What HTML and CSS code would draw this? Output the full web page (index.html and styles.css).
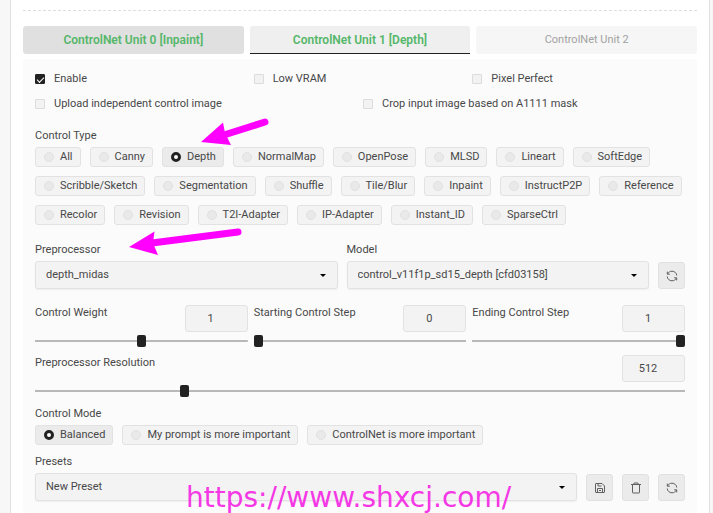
FILE: index.html
```html
<!DOCTYPE html>
<html lang="en">
<head>
<meta charset="utf-8">
<title>ControlNet</title>
<link rel="stylesheet" href="styles.css">
</head>
<body>
<svg class="sprite" aria-hidden="true">
  <symbol id="refresh" viewBox="0 0 12 12"><path d="M1.3 4.2V1.6M1.3 4.2H3.8M1.5 4C2.4 2.2 4.1 1.2 6 1.2c2.6 0 4.5 1.8 4.8 4.3M10.7 7.8v2.6M10.7 7.8H8.2M10.5 8C9.6 9.8 7.9 10.8 6 10.8 3.4 10.8 1.5 9 1.2 6.5"/></symbol>
  <symbol id="save" viewBox="0 0 12 12"><path d="M2 1.500h6L10.500 4v6q0 .5-.5.500H2q-.5 0-.5-.5V2q0-.5.500-.5zM3.500 10.500v-4h5v4M4 1.500v2.500h3.500M5 8.500h2"/></symbol>
  <symbol id="trash" viewBox="0 0 12 12"><path d="M1 2.500h10M4 2.500v-1.500h4v1.500M2.500 2.500v8q0 .5.500.5h6q.5 0 .5-.5v-8"/></symbol>
</svg>
<main class="frame">
  <hr class="divider">
  <div class="tabs" role="tablist">
    <button class="tab tab-hover" role="tab">ControlNet Unit 0 [Inpaint]</button>
    <button class="tab tab-active" role="tab" aria-selected="true">ControlNet Unit 1 [Depth]</button>
    <button class="tab" role="tab">ControlNet Unit 2</button>
  </div>
  <section class="panel">
    <div class="checks thirds">
      <label class="check"><input type="checkbox" checked>Enable</label>
      <label class="check"><input type="checkbox">Low VRAM</label>
      <label class="check"><input type="checkbox">Pixel Perfect</label>
    </div>
    <div class="checks halves">
      <label class="check"><input type="checkbox">Upload independent control image</label>
      <label class="check"><input type="checkbox">Crop input image based on A1111 mask</label>
    </div>

    <fieldset class="group types">
      <legend class="caption">Control Type</legend>
      <div class="pills">
        <label class="pill"><input type="radio" name="type">All</label>
        <label class="pill"><input type="radio" name="type">Canny</label>
        <label class="pill"><input type="radio" name="type" checked>Depth</label>
        <label class="pill"><input type="radio" name="type">NormalMap</label>
        <label class="pill"><input type="radio" name="type">OpenPose</label>
        <label class="pill"><input type="radio" name="type">MLSD</label>
        <label class="pill"><input type="radio" name="type">Lineart</label>
        <label class="pill"><input type="radio" name="type">SoftEdge</label>
        <label class="pill"><input type="radio" name="type">Scribble/Sketch</label>
        <label class="pill"><input type="radio" name="type">Segmentation</label>
        <label class="pill"><input type="radio" name="type">Shuffle</label>
        <label class="pill"><input type="radio" name="type">Tile/Blur</label>
        <label class="pill"><input type="radio" name="type">Inpaint</label>
        <label class="pill"><input type="radio" name="type">InstructP2P</label>
        <label class="pill"><input type="radio" name="type">Reference</label>
        <label class="pill"><input type="radio" name="type">Recolor</label>
        <label class="pill"><input type="radio" name="type">Revision</label>
        <label class="pill"><input type="radio" name="type">T2I-Adapter</label>
        <label class="pill"><input type="radio" name="type">IP-Adapter</label>
        <label class="pill"><input type="radio" name="type">Instant_ID</label>
        <label class="pill"><input type="radio" name="type">SparseCtrl</label>
      </div>
    </fieldset>

    <div class="row models">
      <div class="field">
        <label class="caption" for="pre">Preprocessor</label>
        <div class="select"><select id="pre"><option>depth_midas</option></select></div>
      </div>
      <div class="field">
        <label class="caption" for="model">Model</label>
        <div class="select"><select id="model"><option>control_v11f1p_sd15_depth [cfd03158]</option></select></div>
      </div>
      <button class="tool" aria-label="Refresh models"><svg><use href="#refresh"/></svg></button>
    </div>

    <div class="thirds">
      <div class="slider">
        <div class="slider-head"><label for="weight">Control Weight</label><input class="number" type="text" value="1" aria-label="Control Weight value"></div>
        <input id="weight" type="range" min="0" max="2" step="0.05" value="1">
      </div>
      <div class="slider">
        <div class="slider-head"><label for="start">Starting Control Step</label><input class="number" type="text" value="0" aria-label="Starting Control Step value"></div>
        <input id="start" type="range" min="0" max="1" step="0.01" value="0">
      </div>
      <div class="slider">
        <div class="slider-head"><label for="end">Ending Control Step</label><input class="number" type="text" value="1" aria-label="Ending Control Step value"></div>
        <input id="end" type="range" min="0" max="1" step="0.01" value="1">
      </div>
    </div>
    <div class="slider resolution">
      <div class="slider-head"><label for="res">Preprocessor Resolution</label><input class="number" type="text" value="512" aria-label="Preprocessor Resolution value"></div>
      <input id="res" type="range" min="64" max="2048" step="8" value="512">
    </div>

    <fieldset class="group">
      <legend class="caption">Control Mode</legend>
      <div class="pills">
        <label class="pill"><input type="radio" name="mode" checked>Balanced</label>
        <label class="pill"><input type="radio" name="mode">My prompt is more important</label>
        <label class="pill"><input type="radio" name="mode">ControlNet is more important</label>
      </div>
    </fieldset>

    <div class="row presets">
      <div class="field">
        <label class="caption" for="preset">Presets</label>
        <div class="select"><select id="preset"><option>New Preset</option></select></div>
      </div>
      <button class="tool" aria-label="Save preset"><svg><use href="#save"/></svg></button>
      <button class="tool" aria-label="Delete preset"><svg><use href="#trash"/></svg></button>
      <button class="tool" aria-label="Refresh presets"><svg><use href="#refresh"/></svg></button>
    </div>
  </section>
</main>
<svg class="arrows" width="300" height="260" aria-hidden="true">
  <path class="shaft" d="M265 122L224 135M238 232L152 243"/>
  <path d="M201 142L223 122.500L225 133L231 145ZM129 247L154.500 231.500L153 243L158 255Z"/>
</svg>
<div class="watermark">https://www.shxcj.com/</div>
</body>
</html>
```
FILE: styles.css
```css
* { box-sizing: border-box; }
body {
  margin: 0;
  position: relative;
  background: #f7f7f7;
  color: #484848;
  font: 11px/16px Roboto, "Liberation Sans", sans-serif;
}
button, input, select { font: inherit; color: inherit; margin: 0; }
.sprite { position: absolute; width: 0; height: 0; }
.frame {
  min-height: 100vh;
  margin: 0 3px 0 10px;
  padding: 10px 12px 0;
  background: #fff;
  border: solid #e0e0e0;
  border-width: 0 1px;
}
.divider { margin: 0 0 15px; border: 0; border-top: 1px dashed #dedede; }
.tabs { display: grid; grid-template-columns: repeat(3, 1fr); gap: 6px; margin-bottom: 5px; }
.tab {
  height: 28px;
  padding: 0;
  border: 0;
  border-radius: 3px;
  background: #f6f6f6;
  color: #a2a2a2;
}
.tab-hover, .tab-active { color: #55b76a; font-size: 12px; font-weight: 600; }
.tab-hover { background: #e0e0e0; }
.tab-active { background: #efefef; border-bottom: 1px solid #222; border-radius: 3px 3px 0 0; }
.panel { padding: 12px; background: #fbfbfb; border-radius: 4px; }
.thirds { display: grid; grid-template-columns: repeat(3, 1fr); gap: 6px; }
.halves { display: grid; grid-template-columns: repeat(2, 1fr); gap: 6px; }
.checks { margin-bottom: 9px; }
.check { display: flex; align-items: center; gap: 9px; }
.check input {
  appearance: none;
  width: 10px;
  height: 10px;
  border: 1px solid #dcdcdc;
  border-radius: 1px;
  background: #f2f2f2;
  display: grid;
  place-items: center;
}
.check input:checked { background: #222; border-color: #222; }
.check input:checked::after {
  content: "";
  width: 6px;
  height: 3px;
  border: solid #fff;
  border-width: 0 0 1px 1px;
  transform: rotate(-45deg);
}
.group { margin: 0; padding: 0; border: 0; min-width: 0; }
.types { margin-top: 16px; }
.caption { display: block; padding: 0; margin-bottom: 3px; }
.pills { display: flex; flex-wrap: wrap; gap: 9px; }
.pill {
  display: flex;
  align-items: center;
  gap: 6px;
  height: 20px;
  padding: 0 7px 0 8px;
  border: 1px solid #e2e2e2;
  border-radius: 3px;
  background: #f3f3f3;
}
.pill:has(:checked) { background: #ebebeb; }
.pill input {
  appearance: none;
  width: 10px;
  height: 10px;
  border: 1px solid #e1e1e1;
  border-radius: 50%;
  background: #e9e9e9;
}
.pill input:checked { border: 3px solid #222; background: #fff; }
.row { display: flex; align-items: flex-end; gap: 9px; }
.models { margin: 17px 0 16px; }
.field { flex: 1; min-width: 0; }
.select { position: relative; }
.select::after {
  content: "";
  position: absolute;
  right: 12px;
  top: 13px;
  border: 3px solid transparent;
  border-top-color: #000;
  border-bottom: 0;
}
select {
  appearance: none;
  display: block;
  width: 100%;
  height: 28px;
  padding: 0 24px 0 10px;
  border: 1px solid #e2e2e2;
  border-radius: 3px;
  background: #f3f3f3;
  box-shadow: 0 1px 2px #0000000d;
}
.tool {
  display: grid;
  place-items: center;
  width: 27px;
  height: 27px;
  padding: 0;
  border: 1px solid #e1e1e1;
  border-radius: 3px;
  background: #ebebeb;
}
.tool svg { width: 12px; height: 12px; fill: none; stroke: #606060; }
.slider-head { display: flex; justify-content: space-between; }
.number {
  width: 63px;
  height: 27px;
  padding: 0 11px 0 0;
  border: 1px solid #e2e2e2;
  border-radius: 3px;
  background: #f3f3f3;
  text-align: center;
}
input[type="range"] {
  appearance: none;
  display: block;
  width: 100%;
  height: 12px;
  margin-top: 3px;
  background: linear-gradient(#b8b8b8, #b8b8b8) center / 100% 2px no-repeat;
}
input[type="range"]::-webkit-slider-thumb {
  appearance: none;
  width: 9px;
  height: 12px;
  border-radius: 2px;
  background: #222;
}
.resolution { margin: 8px 0 9px; }
.presets { margin-top: 9px; }
.arrows { position: absolute; left: 0; top: 0; fill: #f0f; pointer-events: none; }
.shaft { stroke: #f0f; stroke-width: 7px; stroke-linecap: round; }
.watermark {
  position: absolute;
  left: 186px;
  bottom: 0;
  color: #f538e5;
  font: 28px/30px "DejaVu Sans", sans-serif;
  pointer-events: none;
}
```
